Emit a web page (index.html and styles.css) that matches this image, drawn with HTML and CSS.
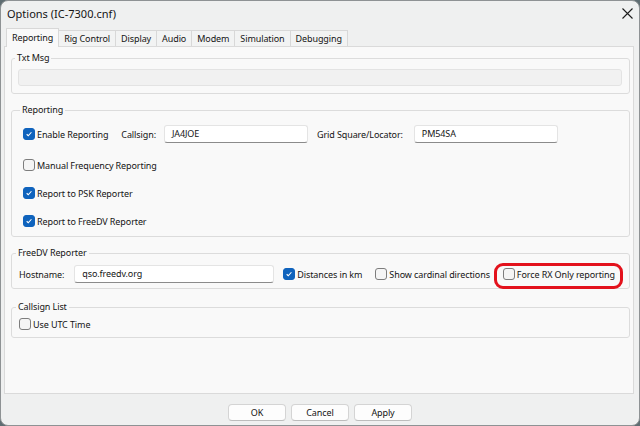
FILE: index.html
```html
<!DOCTYPE html>
<html>
<head>
<meta charset="utf-8">
<link rel="stylesheet" href="styles.css">
</head>
<body>
<div class="window">
  <div class="titlebar">
    <span class="title">Options (IC-7300.cnf)</span>
    <svg class="close" viewBox="0 0 11 11" width="11" height="11"><path d="M0.5 0.5 L10.5 10.5 M10.5 0.5 L0.5 10.5" stroke="#1c1c1c" stroke-width="1.1" fill="none"/></svg>
  </div>
  <div class="tabs">
    <div class="tab active">Reporting</div>
    <div class="tab">Rig Control</div>
    <div class="tab">Display</div>
    <div class="tab">Audio</div>
    <div class="tab">Modem</div>
    <div class="tab">Simulation</div>
    <div class="tab">Debugging</div>
  </div>
  <div class="panel">
    <fieldset class="group g-txt">
      <legend>Txt Msg</legend>
      <div class="field disabled"></div>
    </fieldset>
    <fieldset class="group g-rep">
      <legend>Reporting</legend>
      <div class="row row-first">
        <span class="check on"><span class="box"><svg viewBox="0 0 12 12"><path d="M3.2 6.3 L5.1 8.1 L8.9 3.9" stroke="#fff" stroke-width="1.3" fill="none"/></svg></span><span class="cap cap-enable">Enable Reporting</span></span>
        <span class="lbl lbl-call">Callsign:</span>
        <span class="field input w144">JA4JOE</span>
        <span class="lbl lbl-grid">Grid Square/Locator:</span>
        <span class="field input w144 in-grid">PM54SA</span>
      </div>
      <div class="row"><span class="check"><span class="box"></span><span class="cap">Manual Frequency Reporting</span></span></div>
      <div class="row"><span class="check on"><span class="box"><svg viewBox="0 0 12 12"><path d="M3.2 6.3 L5.1 8.1 L8.9 3.9" stroke="#fff" stroke-width="1.3" fill="none"/></svg></span><span class="cap">Report to PSK Reporter</span></span></div>
      <div class="row"><span class="check on"><span class="box"><svg viewBox="0 0 12 12"><path d="M3.2 6.3 L5.1 8.1 L8.9 3.9" stroke="#fff" stroke-width="1.3" fill="none"/></svg></span><span class="cap">Report to FreeDV Reporter</span></span></div>
    </fieldset>
    <fieldset class="group g-free">
      <legend>FreeDV Reporter</legend>
      <div class="row">
        <span class="lbl lbl-host">Hostname:</span>
        <span class="field input w200">qso.freedv.org</span>
        <span class="check on c-dist"><span class="box"><svg viewBox="0 0 12 12"><path d="M3.2 6.3 L5.1 8.1 L8.9 3.9" stroke="#fff" stroke-width="1.3" fill="none"/></svg></span><span class="cap">Distances in km</span></span>
        <span class="check c-card"><span class="box"></span><span class="cap">Show cardinal directions</span></span>
        <span class="check c-force ring"><span class="box"></span><span class="cap">Force RX Only reporting</span></span>
      </div>
    </fieldset>
    <fieldset class="group g-list">
      <legend>Callsign List</legend>
      <div class="row"><span class="check"><span class="box"></span><span class="cap">Use UTC Time</span></span></div>
    </fieldset>
  </div>
  <div class="buttons">
    <div class="btn">OK</div>
    <div class="btn">Cancel</div>
    <div class="btn">Apply</div>
  </div>
</div>
</body>
</html>
```

FILE: styles.css
```css
* { box-sizing: border-box; }
html, body { margin: 0; width: 640px; height: 426px; overflow: hidden; background: #5f6d72; }
body { font-family: "Noto Sans", "Open Sans", sans-serif; font-size: 9px; letter-spacing: -0.1px; color: #141414; }

.window {
  height: 426px;
  border: 1px solid #8e9294;
  border-radius: 8px;
  background: #eff0f0;
  display: flex;
  flex-direction: column;
  overflow: hidden;
}
.titlebar {
  height: 25px;
  flex: none;
  display: flex;
  align-items: center;
  justify-content: space-between;
  padding: 0 6px 0 6px;
}
.title { font-size: 11px; letter-spacing: 0; }
.close { display: block; }

.tabs {
  flex: none;
  height: 20px;
  display: flex;
  align-items: flex-end;
  padding-left: 5px;
  position: relative;
  z-index: 1;
}
.tab {
  height: 16px;
  padding: 0 5px;
  line-height: 15px;
  border: 1px solid #d8d8d8;
  border-bottom: none;
  border-left: none;
  background: #f2f3f3;
}
.tab.active {
  height: 19px;
  margin-bottom: -1px;
  line-height: 17px;
  border-left: 1px solid #d8d8d8;
  background: #f9f9f9;
}

.panel {
  flex: none;
  height: 348px;
  margin: 0 5px 0 3px;
  border: 1px solid #dadada;
  background: #f9f9f9;
  padding: 4px 3px 0 6px;
  display: flex;
  flex-direction: column;
  gap: 9px;
}

.group {
  margin: 0;
  min-width: 0;
  border: 1px solid #dcdcdc;
  border-radius: 3px;
  padding: 4px 7px 7px 6px;
}
.group legend {
  padding: 0 2px;
  margin-left: -3px;
  line-height: 14px;
}
.g-txt legend { margin-top: -1px; }

.field {
  display: block;
  height: 17px;
  border: 1px solid #e3e3e3;
  border-radius: 3px;
}
.field.disabled { background: #f1f1f1; }
.field.input {
  height: 18px;
  background: #ffffff;
  border-color: #e4e4e4;
  border-bottom-color: #8b8b8b;
  padding: 0 7px;
  line-height: 16px;
}
.w144 { width: 144px; }
.w200 { width: 200px; }

.row {
  display: flex;
  align-items: center;
  height: 18px;
}
.g-rep { padding: 8px 7px 6px 11px; }
.g-rep .row + .row { margin-top: 10px; }
.g-rep .row-first + .row { margin-top: 13px; }

.lbl-call { margin-left: 13px; margin-right: 8px; }
.lbl-grid { margin-left: 9px; margin-right: 11px; }

.g-free { padding: 5px 7px 5px 7px; }
.lbl-host { margin-right: 10px; }
.c-dist { margin-left: 9px; }
.c-card { margin-left: 13px; }
.c-force { margin-left: 13px; }

.g-list { padding: 3px 7px 6px 7px; margin-top: 2px; }
.g-list .row { height: 14px; }

.check {
  display: inline-flex;
  align-items: center;
  gap: 2px;
  white-space: nowrap;
}
.box {
  width: 12px;
  height: 12px;
  border: 1px solid #7d7d7d;
  border-radius: 3px;
  background: #f5f5f5;
  flex: none;
}
.check.on .box {
  background: #0f63bd;
  border-color: #0f63bd;
}
.box svg { display: block; width: 10px; height: 10px; }

.ring { position: relative; }
.ring::after {
  content: "";
  position: absolute;
  left: -9px;
  right: -8px;
  top: -5px;
  bottom: -8px;
  border: 3px solid #e3121c;
  border-radius: 9px;
}

.buttons {
  flex: 1;
  display: flex;
  justify-content: center;
  gap: 5px;
  padding-top: 10px;
}
.btn {
  width: 58px;
  height: 17px;
  border: 1px solid #d4d4d4;
  border-bottom-color: #bcbcbc;
  border-radius: 4px;
  background: #fdfdfd;
  text-align: center;
  line-height: 15px;
}
```
